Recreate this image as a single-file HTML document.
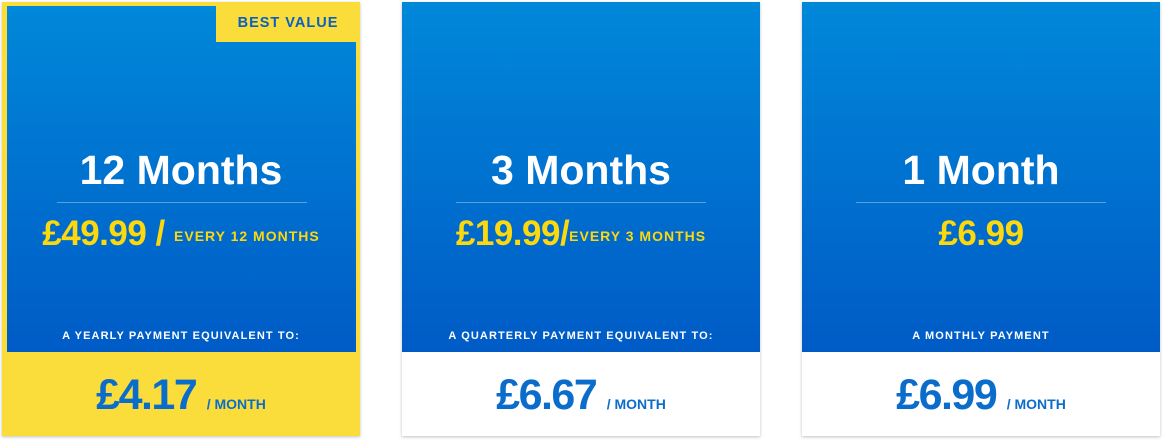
<!DOCTYPE html>
<html><head><meta charset="utf-8"><style>
*{margin:0;padding:0;box-sizing:border-box}
body{width:1165px;height:440px;background:#fff;font-family:"Liberation Sans",sans-serif;font-weight:bold;position:relative;overflow:hidden}
.card{position:absolute;top:2px;width:358px;height:434px;background:#fff;box-shadow:0 1px 3px rgba(0,0,0,.25)}
.blue{position:absolute;left:0;top:0;width:358px;height:350px;background:linear-gradient(#0088d9,#005bc6)}
.t{position:absolute;left:0;width:100%;text-align:center}
.title{top:145px;font-size:41px;color:#fff}
.line{position:absolute;top:200px;left:54px;width:250px;height:1px;background:rgba(255,255,255,.35)}
.price{top:212px;color:#fcd80f;font-size:35px;letter-spacing:-0.5px}
.price small{font-size:14px;letter-spacing:1px;vertical-align:4px}
.eq{top:328px;color:#fff;font-size:11px;letter-spacing:1.1px}
.bot{top:369px;color:#0a6dcc;font-size:43px;letter-spacing:-1.5px}
.bot small{font-size:14px;letter-spacing:0}
</style></head><body>
<div class="card" style="left:2px;background:#fadd3b">
 <div class="blue" style="left:5px;top:4px;width:349px;height:346px"></div>
 <div style="position:absolute;left:214px;top:0;width:144px;height:40px;background:#fadd3b;color:#0a5fbf;font-size:14.5px;letter-spacing:1px;text-align:center;line-height:42px">BEST VALUE</div>
 <div class="t title">12 Months</div><div class="line" style="left:55px"></div>
 <div class="t price">£49.99 / <small>EVERY 12 MONTHS</small></div>
 <div class="t eq">A YEARLY PAYMENT EQUIVALENT TO:</div>
 <div class="t bot">£4.17 <small>/ MONTH</small></div>
</div>
<div class="card" style="left:402px">
 <div class="blue"></div>
 <div class="t title">3 Months</div><div class="line"></div>
 <div class="t price">£19.99/<small>EVERY 3 MONTHS</small></div>
 <div class="t eq">A QUARTERLY PAYMENT EQUIVALENT TO:</div>
 <div class="t bot">£6.67 <small>/ MONTH</small></div>
</div>
<div class="card" style="left:802px">
 <div class="blue"></div>
 <div class="t title">1 Month</div><div class="line"></div>
 <div class="t price">£6.99</div>
 <div class="t eq">A MONTHLY PAYMENT</div>
 <div class="t bot">£6.99 <small>/ MONTH</small></div>
</div>
</body></html>
